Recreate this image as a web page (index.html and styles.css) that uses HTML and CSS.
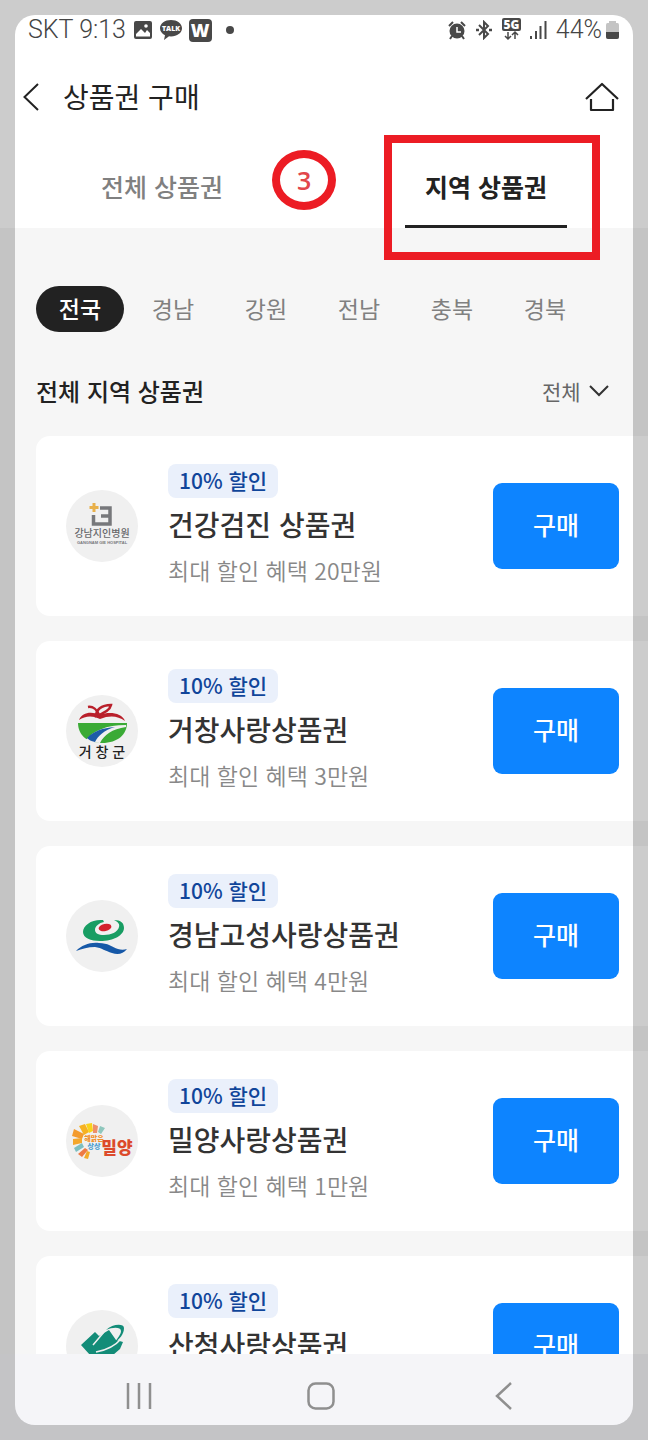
FILE: index.html
```html
<!DOCTYPE html>
<html lang="ko">
<head>
  <meta charset="UTF-8">
  <meta name="viewport" content="width=device-width, initial-scale=1.0">
  <title>상품권 구매</title>
  <link rel="stylesheet" href="styles.css">
</head>
<body>
  <div class="status-bar">
    <div class="status-left">
      <span class="status-text">SKT 9:13</span>
      <svg width="20" height="20" viewBox="0 0 20 20">
        <rect x="1" y="1" width="18" height="18" rx="2" fill="#484848"/>
        <path d="M3 14l5-5 4 4 2-3 3 3v3.500H3z" fill="#fff"/>
        <circle cx="13" cy="6" r="1.800" fill="#fff"/>
      </svg>
      <svg width="22" height="22" viewBox="0 0 22 22">
        <path d="M11 1C5 1 0 4.500 0 9.200c0 3 2 5.600 5 7L4 21l5-3.700 2 .1c6 0 11-3.500 11-8.200S17 1 11 1z" fill="#484848"/>
        <text x="11" y="12" class="talk-text">TALK</text>
      </svg>
      <svg width="23" height="23" viewBox="0 0 23 23">
        <rect width="23" height="23" rx="4" fill="#484848"/>
        <text x="11" y="18" class="w-text">W</text>
      </svg>
      <span class="dot"></span>
    </div>
    <div class="status-right">
      <svg width="18" height="19" viewBox="0 0 18 19" fill="none" stroke="#484848" stroke-width="2">
        <circle cx="9" cy="10" r="7.500" fill="#484848" stroke="none"/>
        <path d="M1 5l4-4M17 5l-4-4M4 15l-2 3M14 15l2 3"/>
        <path d="M9 6v5h4" stroke="#fff" stroke-width="1.500"/>
      </svg>
      <svg width="18" height="20" viewBox="0 0 18 20" fill="none" stroke="#484848" stroke-width="2">
        <path d="M4 5l9 9-4 4V2l4 4-9 9"/>
        <path d="M1 10h3M14 10h3" stroke-width="2.500"/>
      </svg>
      <svg width="19" height="28" viewBox="0 0 19 28">
        <rect y="2" width="19" height="13" rx="2" fill="#484848"/>
        <text x="9.500" y="13" class="net-text">5G</text>
        <path d="M6 16v7M3 20l3 3 3-3M13 23v-7M10 19l3-3 3 3" fill="none" stroke="#484848" stroke-width="1.500"/>
      </svg>
      <svg width="17" height="18" viewBox="0 0 17 18" fill="#484848">
        <path d="M0 15h2v3H0zM5 10h2v8H5zM9.500 5h2v13h-2zM14.500 0h2v18h-2z"/>
      </svg>
      <span class="battery">
        <span class="status-text">44%</span>
        <svg width="13" height="18" viewBox="0 0 13 18">
          <path d="M3 2V0h7v2h1.500Q13 2 13 4v12q0 2-2 2H2q-2 0-2-2V4q0-2 1.500-2z" fill="#c4c4c4"/>
          <path d="M0 11h13v5q0 2-2 2H2q-2 0-2-2z" fill="#484848"/>
        </svg>
      </span>
    </div>
  </div>

  <header class="app-header">
    <button class="icon-btn" type="button" aria-label="뒤로">
      <svg width="16" height="28" viewBox="0 0 16 28" fill="none" stroke="#222" stroke-width="2">
        <path d="M15 1L1.500 14 15 27"/>
      </svg>
    </button>
    <h1>상품권 구매</h1>
    <a class="home" href="#" aria-label="홈">
      <svg width="34" height="30" viewBox="0 0 34 30" fill="none" stroke="#222" stroke-width="2.200" stroke-linejoin="round">
        <path d="M1 17L17 2l16 15M6 17v11h22V17"/>
      </svg>
    </a>
  </header>

  <nav class="tabs">
    <button class="tab" type="button">전체 상품권</button>
    <button class="tab active" type="button">지역 상품권</button>
    <span class="step">3</span>
    <span class="highlight"></span>
  </nav>

  <main>
    <div class="regions">
      <button class="region active" type="button">전국</button>
      <button class="region" type="button">경남</button>
      <button class="region" type="button">강원</button>
      <button class="region" type="button">전남</button>
      <button class="region" type="button">충북</button>
      <button class="region" type="button">경북</button>
    </div>

    <div class="list-head">
      <h2>전체 지역 상품권</h2>
      <div class="filter">
        <select aria-label="상품권 필터">
          <option>전체</option>
        </select>
        <svg width="20" height="12" viewBox="0 0 20 12" fill="none" stroke="#333" stroke-width="2">
          <path d="M1 1l9 9 9-9"/>
        </svg>
      </div>
    </div>

    <ul class="cards">
      <li class="card">
        <svg class="logo" viewBox="0 0 72 72">
          <circle cx="36" cy="36" r="36" fill="#f0f0f0"/>
          <path d="M34 18h10v16H27.500V25M35 26h9" fill="none" stroke="#77787b" stroke-width="3.500"/>
          <path d="M28 13v9M23.500 17.500h9" stroke="#e8b04a" stroke-width="3"/>
          <text x="36" y="47" class="logo-hospital">강남지인병원</text>
          <text x="36" y="54" class="logo-hospital-en">GANGNAM GIE HOSPITAL</text>
        </svg>
        <div class="info">
          <span class="badge">10% 할인</span>
          <h3>건강검진 상품권</h3>
          <p>최대 할인 혜택 20만원</p>
        </div>
        <button class="buy" type="button">구매</button>
      </li>

      <li class="card">
        <svg class="logo" viewBox="0 0 72 72">
          <circle cx="36" cy="36" r="36" fill="#f0f0f0"/>
          <path d="M13 25c3-8 13-9 21-5 9-4 22-2 25 6-7-5-15-6-25-2-8-4-15-3-21 1z" fill="#b9202b"/>
          <path d="M30 21c0-6 5-11 15-11-1 5-6 8-15 11z" fill="none" stroke="#b9202b" stroke-width="2.500"/>
          <path d="M22 12c5-1 9 3 11 8" fill="none" stroke="#b9202b" stroke-width="2.500"/>
          <path d="M12 28h49c0 11-9 20-25 20S12 39 12 28z" fill="#3aaa35"/>
          <path d="M20 45c7-9 20-15 40-15v2c-14 2-22 8-26 16-5 0-10-1-14-3z" fill="#f0f0f0"/>
          <path d="M21 43c7-7 15-10 28-11-11 3-17 9-20 15-4-1-6-2-8-4z" fill="#1d5ba8"/>
          <text x="36" y="62" class="logo-county">거 창 군</text>
        </svg>
        <div class="info">
          <span class="badge">10% 할인</span>
          <h3>거창사랑상품권</h3>
          <p>최대 할인 혜택 3만원</p>
        </div>
        <button class="buy" type="button">구매</button>
      </li>

      <li class="card">
        <svg class="logo" viewBox="0 0 72 72">
          <circle cx="36" cy="36" r="36" fill="#f0f0f0"/>
          <path d="M37 20c-11-1-20 5-20 12 0 6 8 9 17 9 14 0 24-6 24-13 0-5-3-8-10-8 4 2 6 4 5 7-1 5-8 8-15 8-6 0-9-2-9-5 0-4 4-7 9-8z" fill="#189d63"/>
          <ellipse cx="39" cy="27.500" rx="6.500" ry="3.500" transform="rotate(-12 39 27.500)" fill="#d3212d"/>
          <path d="M10 51c6-6 14-9 23-8 9 0 13 4 19 6 3 1 6 1 9 0-4 5-9 6-15 4-7-2-10-5-17-6-7 0-13 2-19 4z" fill="#1658a7"/>
        </svg>
        <div class="info">
          <span class="badge">10% 할인</span>
          <h3>경남고성사랑상품권</h3>
          <p>최대 할인 혜택 4만원</p>
        </div>
        <button class="buy" type="button">구매</button>
      </li>

      <li class="card">
        <svg class="logo" viewBox="0 0 72 72">
          <circle cx="36" cy="36" r="36" fill="#f0f0f0"/>
          <path d="M13 21l6-2 4 8-5 3z" fill="#f6b221"/>
          <path d="M8 24l10 5-2 5-10-3z" fill="#f39b2d"/>
          <path d="M20 19l6-1 1 8-4 2z" fill="#f9d21a"/>
          <path d="M27 19l5 2-1 7h-4z" fill="#ee8f6a"/>
          <path d="M34 21l5 2-4 6-3-2z" fill="#8fc7bd"/>
          <path d="M7 34l9-1v5l-9 2z" fill="#f4a72c"/>
          <path d="M8 43l8-5 2 4-8 5z" fill="#7dbfc1"/>
          <path d="M12 49l7-6 3 2-6 7z" fill="#ee7a44"/>
          <path d="M18 53l3-7 3 1-2 7z" fill="#f3aa29"/>
          <text x="28" y="36" class="logo-slogan">해맑은</text>
          <text x="28" y="44" class="logo-slogan blue">상상</text>
          <text x="51" y="49" class="logo-miryang">밀양</text>
        </svg>
        <div class="info">
          <span class="badge">10% 할인</span>
          <h3>밀양사랑상품권</h3>
          <p>최대 할인 혜택 1만원</p>
        </div>
        <button class="buy" type="button">구매</button>
      </li>

      <li class="card">
        <svg class="logo" viewBox="0 0 72 72">
          <circle cx="36" cy="36" r="36" fill="#f0f0f0"/>
          <path d="M15 35l14-13 4 4 10-6 7 10 7 2-3 7-7 6H24z" fill="#138c78"/>
          <path d="M27 35L38 22M30 42c12-2 20-7 26-14" fill="none" stroke="#f0f0f0" stroke-width="1.500"/>
          <path d="M40 20c6-6 18-7 18-2 0 6-4 11-10 15 4-5 7-9 7-12 0-4-8-4-15-1z" fill="#138c78"/>
        </svg>
        <div class="info">
          <span class="badge">10% 할인</span>
          <h3>산청사랑상품권</h3>
        </div>
        <button class="buy" type="button">구매</button>
      </li>
    </ul>
  </main>

  <nav class="system-nav">
    <button class="icon-btn" type="button" aria-label="최근 앱">
      <svg width="28" height="28" viewBox="0 0 28 28" stroke="#8f8f8f" stroke-width="2.500">
        <path d="M3 1v26M14 1v26M25 1v26"/>
      </svg>
    </button>
    <button class="icon-btn" type="button" aria-label="홈 화면">
      <svg width="28" height="28" viewBox="0 0 28 28" fill="none" stroke="#8f8f8f" stroke-width="2.500">
        <rect x="1.500" y="1.500" width="25" height="25" rx="7"/>
      </svg>
    </button>
    <button class="icon-btn" type="button" aria-label="이전">
      <svg width="28" height="28" viewBox="0 0 28 28" fill="none" stroke="#8f8f8f" stroke-width="2.500">
        <path d="M22 1L8 14l14 13"/>
      </svg>
    </button>
  </nav>

  <div class="frame"></div>
</body>
</html>
```
FILE: styles.css
```css
* {
  box-sizing: border-box;
}

body {
  margin: 0;
  height: 100vh;
  display: flex;
  flex-direction: column;
  overflow: hidden;
  background: #f6f6f6;
  color: #222;
  font-family: "Noto Sans CJK KR", sans-serif;
}

h1, h2, h3, p, ul {
  margin: 0;
  padding: 0;
}

button, select {
  border: 0;
  padding: 0;
  background: none;
  color: inherit;
  font-family: inherit;
  cursor: pointer;
}

svg {
  display: block;
  flex-shrink: 0;
}

/* status bar */
.status-bar {
  height: 48px;
  padding: 12px 29px 0 28px;
  display: flex;
  justify-content: space-between;
  align-items: center;
  flex-shrink: 0;
  background: #fff;
}

.status-left,
.status-right,
.battery {
  display: flex;
  align-items: center;
}

.status-left {
  gap: 7px;
}

.status-right {
  gap: 9px;
}

.battery {
  gap: 4px;
}

.status-text {
  font-family: Roboto, sans-serif;
  font-size: 25px;
  line-height: 28px;
  font-weight: 300;
  color: #444;
}

.dot {
  width: 8px;
  height: 8px;
  margin-left: 7px;
  border-radius: 50%;
  background: #484848;
}

.talk-text,
.w-text,
.net-text {
  font-family: "Open Sans", sans-serif;
  font-weight: 800;
  fill: #fff;
  text-anchor: middle;
}

.talk-text {
  font-size: 7px;
}

.w-text {
  font-size: 18px;
}

.net-text {
  font-size: 12px;
}

/* header */
.app-header {
  height: 98px;
  padding: 0 29px 0 23px;
  display: flex;
  align-items: center;
  gap: 24px;
  flex-shrink: 0;
  background: #fff;
}

.app-header h1 {
  padding-bottom: 2px;
  font-size: 28px;
  line-height: 40px;
  font-weight: 400;
}

.home {
  margin-left: auto;
}

/* tabs */
.tabs {
  position: relative;
  height: 82px;
  display: flex;
  flex-shrink: 0;
  background: #fff;
}

.tab {
  flex: 1;
  padding-bottom: 2px;
  font-size: 25px;
  line-height: 36px;
  font-weight: 500;
  color: #808080;
  position: relative;
}

.tab.active {
  font-weight: 700;
  color: #222;
}

.tab.active::after {
  content: "";
  position: absolute;
  bottom: 0;
  left: 25%;
  width: 50%;
  height: 3px;
  background: #222;
}

.step {
  position: absolute;
  top: 4px;
  left: 42%;
  width: 64px;
  height: 60px;
  border: 8px solid #ec1c24;
  border-radius: 50%;
  display: flex;
  justify-content: center;
  align-items: center;
  font-family: "Open Sans", sans-serif;
  font-size: 25px;
  font-weight: 600;
  color: #e2474b;
}

.highlight {
  position: absolute;
  top: -11px;
  right: 48px;
  width: 216px;
  height: 125px;
  border: 8px solid #ec1c24;
  pointer-events: none;
}

/* content */
main {
  flex: 1;
  min-height: 0;
  overflow: hidden;
  padding: 58px 0 0 36px;
}

.regions {
  display: flex;
  gap: 5px;
}

.region {
  width: 88px;
  height: 46px;
  padding-bottom: 3px;
  border-radius: 23px;
  font-size: 23px;
  color: #808080;
}

.region.active {
  background: #222;
  color: #fff;
  font-weight: 500;
}

.list-head {
  height: 104px;
  padding: 14px 39px 0 0;
  display: flex;
  justify-content: space-between;
  align-items: center;
}

.list-head h2 {
  line-height: 36px;
  font-size: 24px;
  font-weight: 500;
}

.filter {
  display: flex;
  align-items: center;
  gap: 8px;
}

.filter select {
  appearance: none;
  height: 36px;
  font-size: 21px;
  color: #666;
}

.cards {
  list-style: none;
  display: flex;
  flex-direction: column;
  gap: 25px;
}

.card {
  height: 180px;
  padding: 0 29px 0 30px;
  display: flex;
  align-items: center;
  gap: 30px;
  flex-shrink: 0;
  border-radius: 14px 0 0 14px;
  background: #fff;
}

.logo {
  width: 72px;
  height: 72px;
}

.logo text {
  text-anchor: middle;
}

.logo-hospital {
  font-size: 10px;
  font-weight: 500;
  fill: #66676a;
}

.logo-hospital-en {
  font-family: "Liberation Sans", sans-serif;
  font-size: 4px;
  font-weight: 700;
  fill: #77787b;
}

.logo-county {
  font-size: 14px;
  font-weight: 500;
  fill: #222;
}

.logo-slogan {
  font-size: 7px;
  font-weight: 900;
  fill: #f0912d;
}

.logo-slogan.blue {
  fill: #4c9fd0;
}

.logo-miryang {
  font-size: 17px;
  font-weight: 900;
  fill: #dc4a2b;
}

.info {
  flex: 1;
  align-self: flex-start;
  padding-top: 28px;
}

.badge {
  display: block;
  width: fit-content;
  padding: 0 11px 1px;
  border-radius: 8px;
  background: #eaf0fb;
  color: #10459a;
  font-size: 21px;
  line-height: 33px;
  font-weight: 500;
}

.info h3 {
  font-size: 28px;
  line-height: 52px;
  font-weight: 500;
  color: #333;
}

.info p {
  font-size: 23px;
  line-height: 40px;
  font-weight: 350;
  color: #888;
}

.buy {
  width: 126px;
  height: 86px;
  padding-bottom: 4px;
  border-radius: 9px;
  background: #0d84ff;
  color: #fff;
  font-size: 25px;
  font-weight: 500;
}

/* system navigation */
.system-nav {
  height: 86px;
  padding: 0 54px 2px 48px;
  display: flex;
  align-items: center;
  justify-content: space-around;
  flex-shrink: 0;
  background: #f5f5f8;
}

/* dimmed edge round the screen */
.frame {
  position: fixed;
  inset: 15px;
  border-radius: 20px;
  box-shadow: 0 0 0 40px rgba(0, 0, 0, 0.2);
  pointer-events: none;
}
```
